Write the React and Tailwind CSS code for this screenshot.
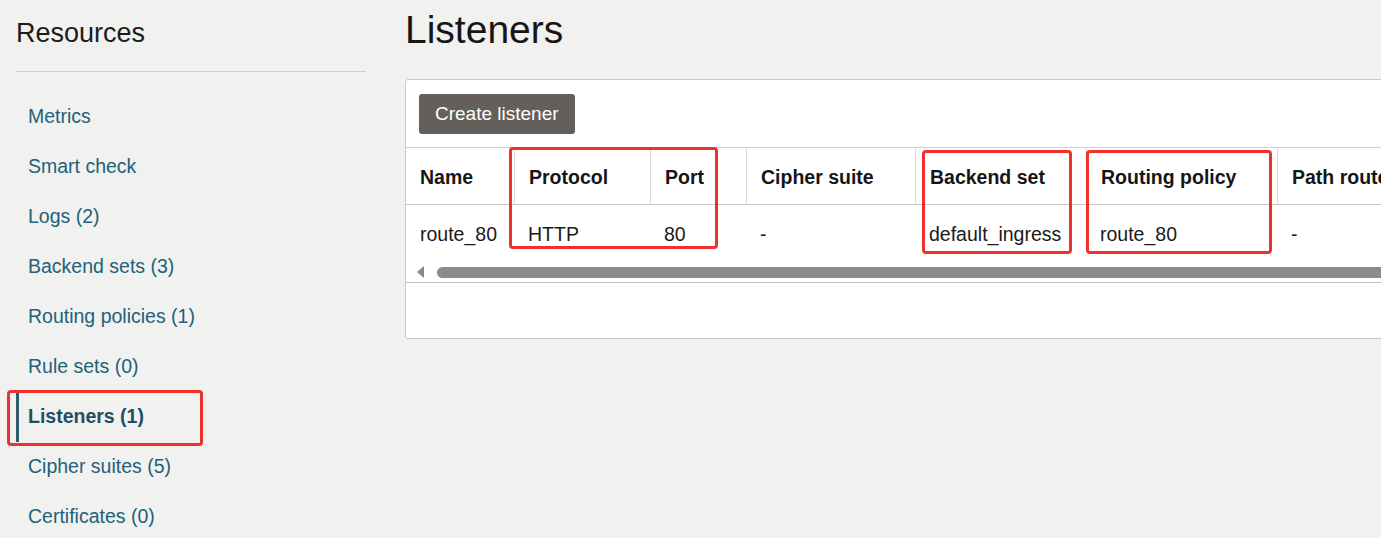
import React from "react";

const NAV = [
  "Metrics",
  "Smart check",
  "Logs (2)",
  "Backend sets (3)",
  "Routing policies (1)",
  "Rule sets (0)",
  "Listeners (1)",
  "Cipher suites (5)",
  "Certificates (0)",
];

const COLUMNS = [
  { title: "Name", value: "route_80", w: "w-[108px]" },
  { title: "Protocol", value: "HTTP", w: "w-[136px]" },
  { title: "Port", value: "80", w: "w-[96px]" },
  { title: "Cipher suite", value: "-", w: "w-[169px]" },
  { title: "Backend set", value: "default_ingress", w: "w-[171px]" },
  { title: "Routing policy", value: "route_80", w: "w-[191px]" },
  { title: "Path route set", value: "-", w: "w-[220px]" },
];

export default function App() {
  return (
    <div
      className="relative w-[1381px] h-[538px] overflow-hidden bg-[#f1f1ef] flex"
      style={{ fontFamily: '"Liberation Sans", Arial, sans-serif' }}
    >
      {/* Sidebar */}
      <aside className="w-[366px] shrink-0 pl-4">
        <h2 className="text-[27px] leading-none text-[#1c1c1c] pt-[20px] pb-[21px]">Resources</h2>
        <div className="h-px bg-[#cfcfcd] mt-[3px] mb-[20px]" />
        <nav className="flex flex-col">
          {NAV.map(item => {
            const active = item === "Listeners (1)";
            return (
              <div
                key={item}
                className={`h-[50px] flex items-center text-[19.5px] ${
                  active
                    ? "border-l-[3px] border-[#2c5d6c] pl-[9px] font-bold text-[#1e4f63]"
                    : "pl-3 text-[#22617a]"
                }`}
              >
                {item}
              </div>
            );
          })}
        </nav>
      </aside>

      {/* Main */}
      <main className="flex-1 pl-[39px] overflow-hidden">
        <h1 className="text-[39px] leading-none text-[#161616] pt-[10px] h-[79px]">Listeners</h1>

        <div className="w-[1100px] h-[260px] bg-white border border-[#c9c9c9] rounded-[3px]">
          <div className="px-[13px] pt-[14px] pb-[13px]">
            <button className="h-10 px-[16px] rounded-[3px] bg-[#655f5b] text-white text-[19px]">
              Create listener
            </button>
          </div>

          {/* Table */}
          <div className="border-t border-[#cfcfcf]">
            <div className="flex h-[57px] border-b border-[#c8c8c8]">
              {COLUMNS.map((c, i) => (
                <div
                  key={c.title}
                  className={`${c.w} shrink-0 flex items-center pl-[14px] pt-[3px] text-[19.5px] font-bold text-[#161616] ${
                    i > 0 ? "border-l border-[#d8d8d8]" : ""
                  }`}
                >
                  {c.title}
                </div>
              ))}
            </div>
            <div className="flex h-[57px]">
              {COLUMNS.map(c => (
                <div
                  key={c.title}
                  className={`${c.w} shrink-0 flex items-center pl-[14px] pt-[2px] text-[19.5px] text-[#1a1a1a]`}
                >
                  {c.value}
                </div>
              ))}
            </div>

            {/* Horizontal scrollbar */}
            <div className="h-[21px] flex items-center pl-[10px] border-b border-[#bdbdbd]">
              <svg width="9" height="12" viewBox="0 0 9 12" className="shrink-0">
                <path d="M8 0 L1 6 L8 12 Z" fill="#8a8a8a" />
              </svg>
              <div className="ml-[12px] flex-1 h-[11px] rounded-full bg-[#8b8b8b]" />
            </div>
          </div>
        </div>
      </main>

      {/* Annotation boxes */}
      <div className="absolute left-[7px] top-[390px] w-[196px] h-[56px] border-[3px] border-[#f0302c] rounded-[4px]" />
      <div className="absolute left-[509px] top-[147px] w-[209px] h-[102px] border-[3px] border-[#f0302c] rounded-[4px]" />
      <div className="absolute left-[922px] top-[150px] w-[150px] h-[104px] border-[3px] border-[#f0302c] rounded-[4px]" />
      <div className="absolute left-[1086px] top-[150px] w-[186px] h-[104px] border-[3px] border-[#f0302c] rounded-[4px]" />
    </div>
  );
}
